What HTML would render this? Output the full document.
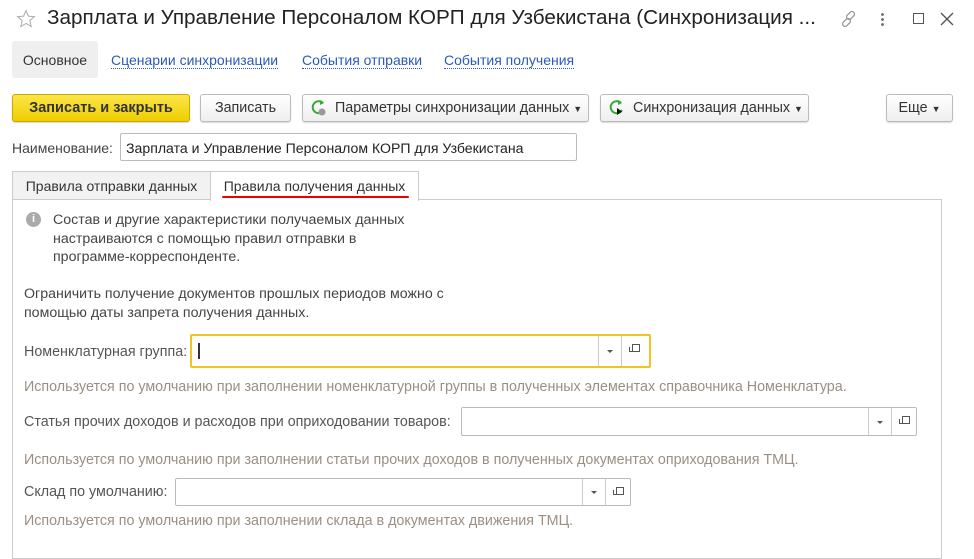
<!DOCTYPE html>
<html><head><meta charset="utf-8"><style>
*{box-sizing:border-box;margin:0;padding:0}
body{width:974px;height:555px;background:#fff;position:relative;overflow:hidden;font-family:"Liberation Sans","Noto Sans CJK SC",sans-serif;font-size:14.3px;color:#333}
.a{position:absolute;white-space:nowrap}
.lnk{color:#2a5ab8;border-bottom:1px dotted #2a5ab8;line-height:15px;font-size:14px}
.btn{position:absolute;top:94px;height:28px;border:1px solid #bbb;border-radius:3px;background:linear-gradient(#fff,#eee);box-shadow:0 1px 1px rgba(0,0,0,.15);font-size:14.3px;color:#333;line-height:27px;text-align:center}
.inp{position:absolute;border:1px solid #bbb;border-radius:2px;background:#fff}
.dd{position:absolute;top:0;bottom:0;border-left:1px solid #ccc;width:23px}
.dd:after{content:"";position:absolute;left:8px;top:50%;margin-top:-1px;border:3px solid transparent;border-top:3px solid #555;border-bottom:0}
.op{position:absolute;top:0;bottom:0;border-left:1px solid #ccc;width:25px}
.op:before{content:"";position:absolute;left:10px;top:8px;width:6px;height:6px;border:1px solid #555}
.op:after{content:"";position:absolute;left:7px;top:11px;width:4px;height:4px;border-left:1px solid #555;border-bottom:1px solid #555}
.hint{color:#9a8f82;font-size:14.3px}
</style></head><body>
<svg class="a" style="left:16px;top:9px" width="20" height="20" viewBox="0 0 20 20"><path d="M10 1.5l2.4 5.6 6 .5-4.6 4 1.4 5.9L10 14.4 4.8 17.5l1.4-5.9-4.6-4 6-.5z" fill="none" stroke="#aaa" stroke-width="1"/></svg>
<div class="a" style="left:47px;top:6px;font-size:20.7px;color:#222">Зарплата и Управление Персоналом КОРП для Узбекистана (Синхронизация ...</div>
<svg class="a" style="left:839px;top:9px" width="20" height="20" viewBox="0 0 20 20"><g fill="none" stroke="#999" stroke-width="1.3"><rect x="9" y="2" width="5" height="9" rx="2.5" transform="rotate(45 11.5 6.5)"/><rect x="5" y="9" width="5" height="9" rx="2.5" transform="rotate(45 7.5 13.5)"/></g></svg>
<div class="a" style="left:881px;top:12px;width:3px;height:14px;background:radial-gradient(circle,#777 1.3px,transparent 1.6px) 0 0/3px 5px"></div>
<div class="a" style="left:913px;top:13px;width:11px;height:11px;border:1.5px solid #555"></div>
<svg class="a" style="left:940px;top:12px" width="14" height="14"><path d="M1 1L13 13M13 1L1 13" stroke="#555" stroke-width="1.4"/></svg>

<div class="a" style="left:12px;top:41px;width:86px;height:37px;background:#efefef;border-radius:3px;font-size:14px;line-height:39px;text-align:center;color:#333">Основное</div>
<div class="a lnk" style="left:111px;top:53px">Сценарии синхронизации</div>
<div class="a lnk" style="left:302px;top:53px">События отправки</div>
<div class="a lnk" style="left:444px;top:53px">События получения</div>

<div class="btn" style="left:12px;width:178px;background:linear-gradient(#fbe549,#f0ce00);border-color:#c9a900;font-weight:bold;color:#333;font-size:14.5px">Записать и закрыть</div>
<div class="btn" style="left:200px;width:91px">Записать</div>
<div class="btn" style="left:302px;width:287px;text-align:left;padding-left:32px">Параметры синхронизации данных <span style="font-size:9px">▼</span></div>
<svg class="a" style="left:310px;top:99px" width="18" height="18"><path d="M13 4A6 6 0 1 0 14 11" fill="none" stroke="#3a3" stroke-width="2"/><path d="M10 1l4 3-4 2z" fill="#3a3"/><circle cx="12" cy="13" r="3.5" fill="#999"/></svg>
<div class="btn" style="left:600px;width:209px;text-align:left;padding-left:32px">Синхронизация данных <span style="font-size:9px">▼</span></div>
<svg class="a" style="left:608px;top:99px" width="18" height="18"><path d="M13 4A6 6 0 1 0 14 11" fill="none" stroke="#3a3" stroke-width="2"/><path d="M10 1l4 3-4 2z" fill="#3a3"/><path d="M9 9l5 3.5-5 3.5z" fill="#111"/></svg>
<div class="btn" style="left:886px;width:67px">Еще <span style="font-size:9px">▼</span></div>

<div class="a" style="left:12px;top:140px;font-size:14px;color:#444">Наименование:</div>
<div class="inp" style="left:120px;top:133px;width:457px;height:28px;padding:6px 5px;font-size:14.1px;color:#222">Зарплата и Управление Персоналом КОРП для Узбекистана</div>

<div class="a" style="left:12px;top:171px;width:199px;height:29px;border:1px solid #ccc;border-bottom:none;background:#f2f2f2;font-size:14px;line-height:28px;text-align:center;color:#333">Правила отправки данных</div>
<div class="a" style="left:12px;top:199px;width:930px;height:360px;border:1px solid #ccc"></div>
<div class="a" style="left:210px;top:171px;width:209px;height:30px;border:1px solid #ccc;border-bottom:none;background:#fff;font-size:14px;line-height:28px;text-align:center;color:#333">Правила получения данных</div>
<div class="a" style="left:222px;top:196px;width:187px;height:2px;background:#e00;border-radius:1px"></div>

<div class="a" style="left:26px;top:212px;width:15px;height:15px;border-radius:50%;background:#aaa;color:#fff;font-size:11px;font-weight:bold;text-align:center;line-height:15px">i</div>
<div class="a" style="left:53px;top:211px;line-height:18.5px;font-size:14.2px;color:#444">Состав и другие характеристики получаемых данных<br>настраиваются с помощью правил отправки в<br>программе-корреспонденте.</div>
<div class="a" style="left:24px;top:285px;line-height:18.5px;font-size:14.2px;color:#444">Ограничить получение документов прошлых периодов можно с<br>помощью даты запрета получения данных.</div>

<div class="a" style="left:24px;top:344px;color:#555">Номенклатурная группа:</div>
<div class="inp" style="left:190px;top:334px;width:461px;height:34px;border:2px solid #f3c320">
<div class="a" style="left:6px;top:7px;width:1.5px;height:16px;background:#333"></div>
<div class="dd" style="left:406px"></div><div class="op" style="left:429px"></div></div>
<div class="a hint" style="left:24px;top:379px">Используется по умолчанию при заполнении номенклатурной группы в полученных элементах справочника Номенклатура.</div>

<div class="a" style="left:24px;top:414px;color:#555">Статья прочих доходов и расходов при оприходовании товаров:</div>
<div class="inp" style="left:461px;top:407px;width:456px;height:29px"><div class="dd" style="left:406px"></div><div class="op" style="left:429px"></div></div>
<div class="a hint" style="left:24px;top:452px">Используется по умолчанию при заполнении статьи прочих доходов в полученных документах оприходования ТМЦ.</div>

<div class="a" style="left:24px;top:484px;color:#555">Склад по умолчанию:</div>
<div class="inp" style="left:175px;top:478px;width:456px;height:28px"><div class="dd" style="left:406px"></div><div class="op" style="left:429px"></div></div>
<div class="a hint" style="left:24px;top:513px">Используется по умолчанию при заполнении склада в документах движения ТМЦ.</div>
</body></html>
